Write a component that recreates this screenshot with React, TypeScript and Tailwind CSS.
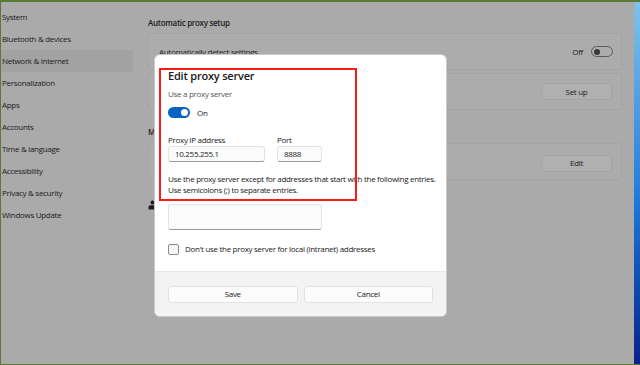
import React from "react";

const font = { fontFamily: '"Open Sans", "Noto Sans", "Liberation Sans", sans-serif' };

const navItems = [
  "System",
  "Bluetooth & devices",
  "Network & internet",
  "Personalization",
  "Apps",
  "Accounts",
  "Time & language",
  "Accessibility",
  "Privacy & security",
  "Windows Update",
];

export default function App() {
  return (
    <div className="w-[640px] h-[365px] overflow-hidden bg-[#5b7b34] relative tracking-[-0.3px]" style={font}>
      <div className="absolute left-[1px] top-[2px] right-0 bottom-[1px] flex">
        {/* dimmed settings window */}
        <div className="flex-1 bg-[#aaaaaa] flex text-[#1c1c1c]">
          <div className="w-[132px] pt-[4px] flex flex-col">
            {navItems.map((n) => (
              <div
                key={n}
                className={
                  "h-[22px] flex items-center pl-[1px] text-[8px] rounded-r-[3px] " +
                  (n === "Network & internet" ? "bg-[#a2a2a2]" : "")
                }
              >
                {n}
              </div>
            ))}
          </div>
          <div className="flex-1 pl-[15px] pr-[12px] pt-[15px] flex flex-col">
            <div className="text-[8px] font-semibold h-[12px] flex items-center">Automatic proxy setup</div>
            <div className="mt-[4px] h-[37px] rounded-[3px] bg-[#acacac] border border-[#a3a3a3] flex items-center pl-[10px] pr-[8px]">
              <span className="text-[8px]">Automatically detect settings</span>
              <div className="ml-auto flex items-center gap-[8px]">
                <span className="text-[8px]">Off</span>
                <div className="w-[22px] h-[11px] rounded-full border border-[#5a5a5a] flex items-center px-[2px]">
                  <div className="w-[6px] h-[6px] rounded-full bg-[#3a3a3a]" />
                </div>
              </div>
            </div>
            <div className="mt-[3px] h-[37px] rounded-[3px] bg-[#acacac] border border-[#a3a3a3] flex items-center justify-end px-[9px]">
              <div className="w-[71px] h-[17px] rounded-[3px] bg-[#b0b0b0] border border-[#a4a4a4] text-[8px] flex items-center justify-center">
                Set up
              </div>
            </div>
            <div className="mt-[16px] text-[8px] font-semibold h-[12px] flex items-center">Manual proxy setup</div>
            <div className="mt-[5px] h-[37px] rounded-[3px] bg-[#acacac] border border-[#a3a3a3] flex items-center justify-end px-[9px]">
              <div className="mt-[3px] w-[71px] h-[17px] rounded-[3px] bg-[#b0b0b0] border border-[#a4a4a4] text-[8px] flex items-center justify-center">
                Edit
              </div>
            </div>
            <div className="mt-[19px] flex items-center gap-[6px]">
              <svg width="9" height="10" viewBox="0 0 9 10">
                <circle cx="4.5" cy="2.5" r="2" fill="#1c1c1c" />
                <path d="M0.5 9.5 V7 Q0.5 5.2 2.5 5.2 H6.5 Q8.5 5.2 8.5 7 V9.5 Z" fill="#1c1c1c" />
              </svg>
              <span className="text-[8px]">Get help</span>
            </div>
          </div>
        </div>
        {/* desktop strip on the right */}
        <div className="w-[6px] bg-gradient-to-b from-[#7fc2ea] via-[#1f78d8] via-55% to-[#0c1f8a]" />
      </div>

      {/* dialog */}
      <div className="absolute left-[154px] top-[54px] w-[293px] h-[263px] rounded-[6px] bg-white border border-[#c9c9c9] overflow-hidden flex flex-col text-[#1a1a1a]">
        <div className="flex-1 px-[13px] pt-[12px] flex flex-col">
          <div className="text-[11px] font-semibold leading-[18px] tracking-[-0.2px]">Edit proxy server</div>
          <div className="mt-[3px] text-[8px] text-[#555] leading-[12px]">Use a proxy server</div>
          <div className="mt-[7px] flex items-center gap-[7px]">
            <div className="w-[22px] h-[11px] rounded-full bg-[#0a63c4] flex items-center justify-end px-[2px]">
              <div className="w-[7px] h-[7px] rounded-full bg-white" />
            </div>
            <span className="text-[8px] leading-[11px]">On</span>
          </div>
          <div className="mt-[16px] flex gap-[12px]">
            <div className="flex flex-col">
              <span className="text-[8px] leading-[12px]">Proxy IP address</span>
              <div className="w-[97px] h-[16px] rounded-[3px] border border-[#e3e3e3] border-b-[#9a9a9a] bg-[#fbfbfb] text-[8px] flex items-center px-[6px]">
                10.255.255.1
              </div>
            </div>
            <div className="flex flex-col">
              <span className="text-[8px] leading-[12px]">Port</span>
              <div className="w-[45px] h-[16px] rounded-[3px] border border-[#e3e3e3] border-b-[#9a9a9a] bg-[#fbfbfb] text-[8px] flex items-center px-[6px]">
                8888
              </div>
            </div>
          </div>
          <div className="mt-[11px] text-[8px] leading-[11px] whitespace-nowrap">
            Use the proxy server except for addresses that start with the following entries.
            <br />
            Use semicolons (;) to separate entries.
          </div>
          <div className="mt-[9px] w-[154px] h-[26px] rounded-[3px] border border-[#e3e3e3] border-b-[#9a9a9a] bg-[#fbfbfb]" />
          <div className="mt-[13px] flex items-center gap-[6px]">
            <div className="w-[11px] h-[11px] rounded-[2px] border border-[#8a8a8a] bg-[#f6f6f6]" />
            <span className="text-[8px]">Don't use the proxy server for local (intranet) addresses</span>
          </div>
        </div>
        <div className="h-[45px] bg-[#f3f3f3] border-t border-[#e8e8e8] flex items-center gap-[6px] px-[13px]">
          <div className="flex-1 h-[17px] rounded-[3px] bg-[#fbfbfb] border border-[#e2e2e2] text-[8px] flex items-center justify-center">Save</div>
          <div className="flex-1 h-[17px] rounded-[3px] bg-[#fbfbfb] border border-[#e2e2e2] text-[8px] flex items-center justify-center">Cancel</div>
        </div>
      </div>

      {/* red annotation */}
      <div className="absolute left-[159px] top-[68px] w-[198px] h-[133px] border-2 border-[#ff1a1a]" />
    </div>
  );
}
